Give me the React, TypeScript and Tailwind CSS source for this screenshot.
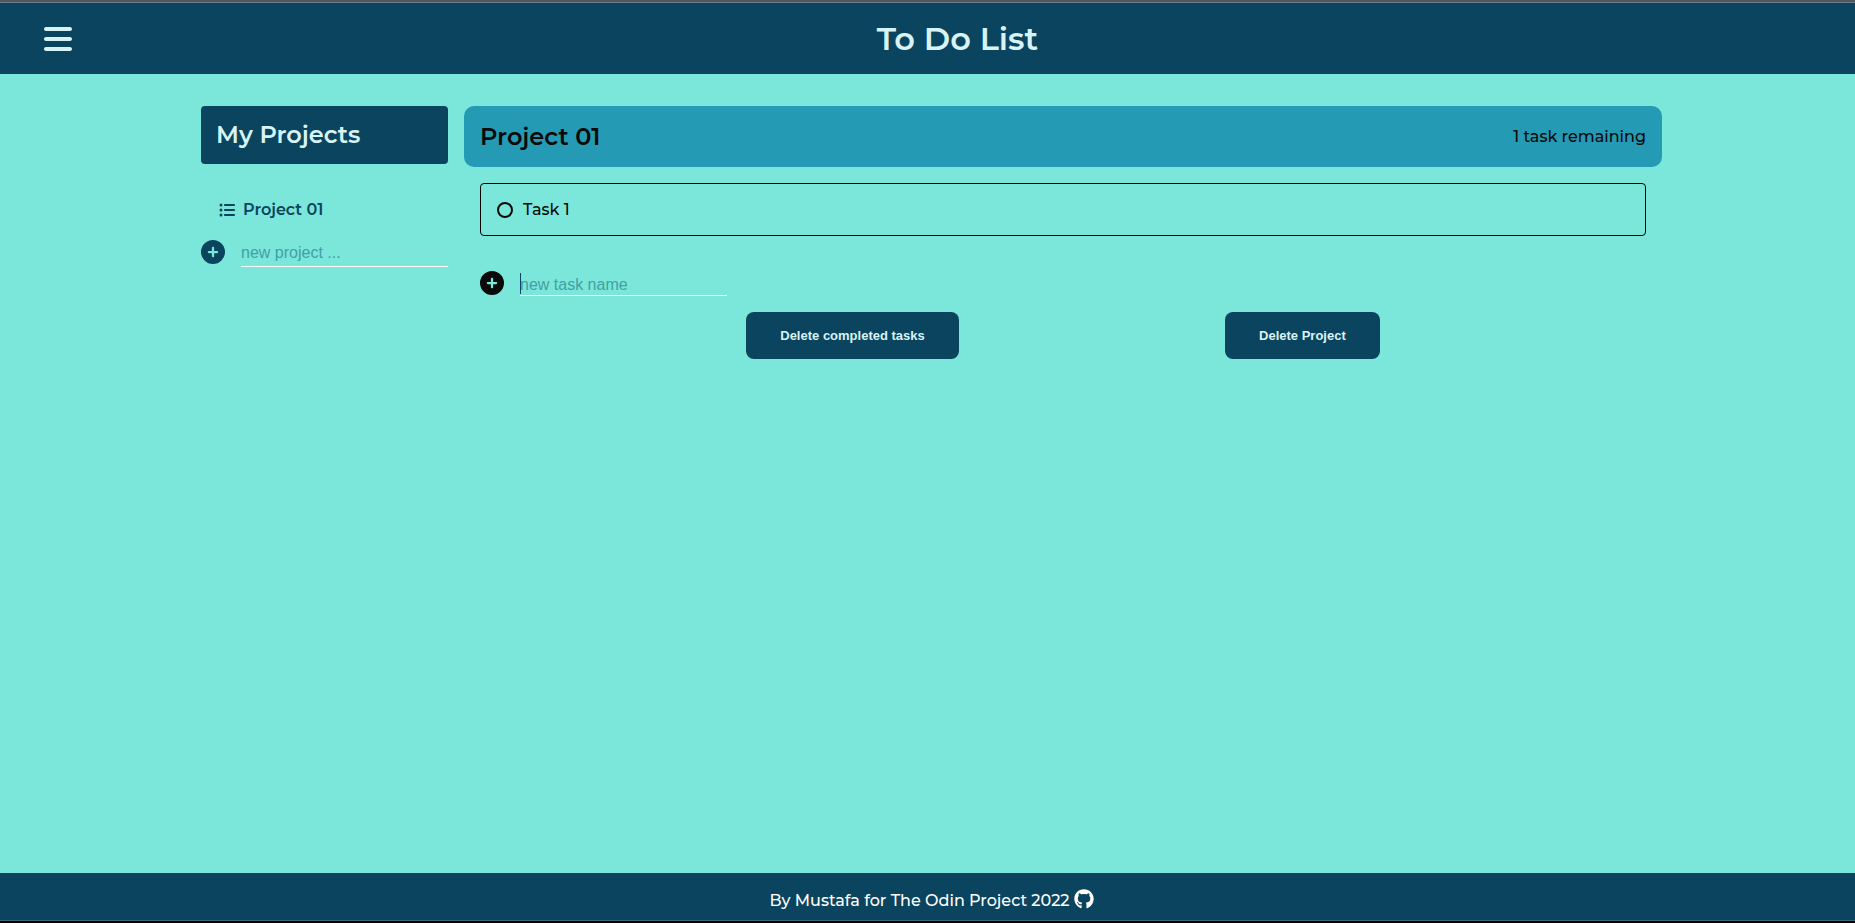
import { useState } from "react";
import { FaGithub } from "react-icons/fa";
import { FaBars, FaCirclePlus, FaListUl } from "react-icons/fa6";

type AddFieldProps = {
  label: string;
  placeholder: string;
  tone: string;
  inputClass: string;
  focused?: boolean;
};

function AddField({ label, placeholder, tone, inputClass, focused }: AddFieldProps) {
  const [value, setValue] = useState("");
  return (
    <form className="flex items-start gap-4" onSubmit={(e) => e.preventDefault()}>
      <button type="submit" aria-label={label} className={`shrink-0 ${tone}`}>
        <FaCirclePlus className="size-6" />
      </button>
      <div className="relative">
        <input
          type="text"
          aria-label={placeholder}
          placeholder={placeholder}
          value={value}
          autoFocus={focused}
          onChange={(e) => setValue(e.target.value)}
          className={`block w-[207px] min-w-0 border-b border-white bg-transparent font-['Liberation_Sans',sans-serif] text-base text-[#0b445e] outline-none placeholder:text-[#439fa2] ${inputClass}`}
        />
        {focused && value === "" && <span className="absolute top-0.5 left-0 h-[21px] w-px bg-[#0b445e]" />}
      </div>
    </form>
  );
}

export default function App() {
  return (
    <div className="flex min-h-screen flex-col bg-[#7be7da] font-['Montserrat','Inter',sans-serif] text-[#0a0a0a]">
      <header className="flex h-[74px] items-center border-t-2 border-[#4c5862] bg-[#0b445e] text-[#d8f3f6]">
        <div className="flex h-full w-full items-center border-t border-[#717d86] pr-3 pl-11">
          <button type="button" aria-label="Toggle projects">
            <FaBars className="h-8 w-7" />
          </button>
          <h1 className="flex-1 text-center text-[32px] font-semibold">To Do List</h1>
        </div>
      </header>

      <main className="flex-1 pt-8 pl-2">
        <div className="mx-auto flex w-full max-w-[1461px] items-start gap-4">
          <aside className="w-[247px] shrink-0">
            <h2 className="rounded bg-[#0b445e] px-[15px] py-[11px] text-2xl leading-9 font-semibold text-[#d8f3f6]">
              My Projects
            </h2>
            <nav className="mt-[30px] px-[18px]">
              <a href="#project-01" className="flex items-center gap-2 py-1 text-base font-semibold text-[#0b445e]">
                <FaListUl className="size-4" />
                Project 01
              </a>
            </nav>
            <div className="mt-3.5">
              <AddField label="Add project" placeholder="new project ..." tone="text-[#0b445e]" inputClass="h-[27px]" />
            </div>
          </aside>

          <section className="min-w-0 flex-1">
            <div className="flex h-[61px] items-center justify-between rounded-[10px] bg-[#259ab4] px-4">
              <h2 className="text-2xl font-semibold">Project 01</h2>
              <p className="text-base font-medium">1 task remaining</p>
            </div>
            <div className="px-4 pt-4">
              <ul>
                <li className="rounded border border-black px-4">
                  <label className="flex h-[51px] items-center gap-[10px] text-base font-medium">
                    <input
                      type="checkbox"
                      className="size-4 appearance-none rounded-full border-2 border-[#0a0a0a] checked:bg-[#0a0a0a]"
                    />
                    Task 1
                  </label>
                </li>
              </ul>
              <div className="mt-[35px]">
                <AddField label="Add task" placeholder="new task name" tone="text-[#0a0a0a]" inputClass="h-[25px] pt-[3px]" focused />
              </div>
              <div className="mt-4 flex justify-evenly font-['Liberation_Sans',sans-serif] text-[13px] leading-[15px] font-bold text-[#d8f3f6]">
                <button type="button" className="rounded-lg bg-[#0b445e] px-[34px] py-4">Delete completed tasks</button>
                <button type="button" className="rounded-lg bg-[#0b445e] px-[34px] py-4">Delete Project</button>
              </div>
            </div>
          </section>
        </div>
      </main>

      <footer className="border-b-2 border-black bg-[#0b445e]">
        <div className="flex h-12 items-center justify-center gap-1 border-b border-[#3a6a7f] pt-2 pl-2 text-base font-medium text-white">
          <p>By Mustafa for The Odin Project 2022</p>
          <a href="#github" aria-label="GitHub" className="pb-1">
            <FaGithub className="size-5" />
          </a>
        </div>
      </footer>
    </div>
  );
}
